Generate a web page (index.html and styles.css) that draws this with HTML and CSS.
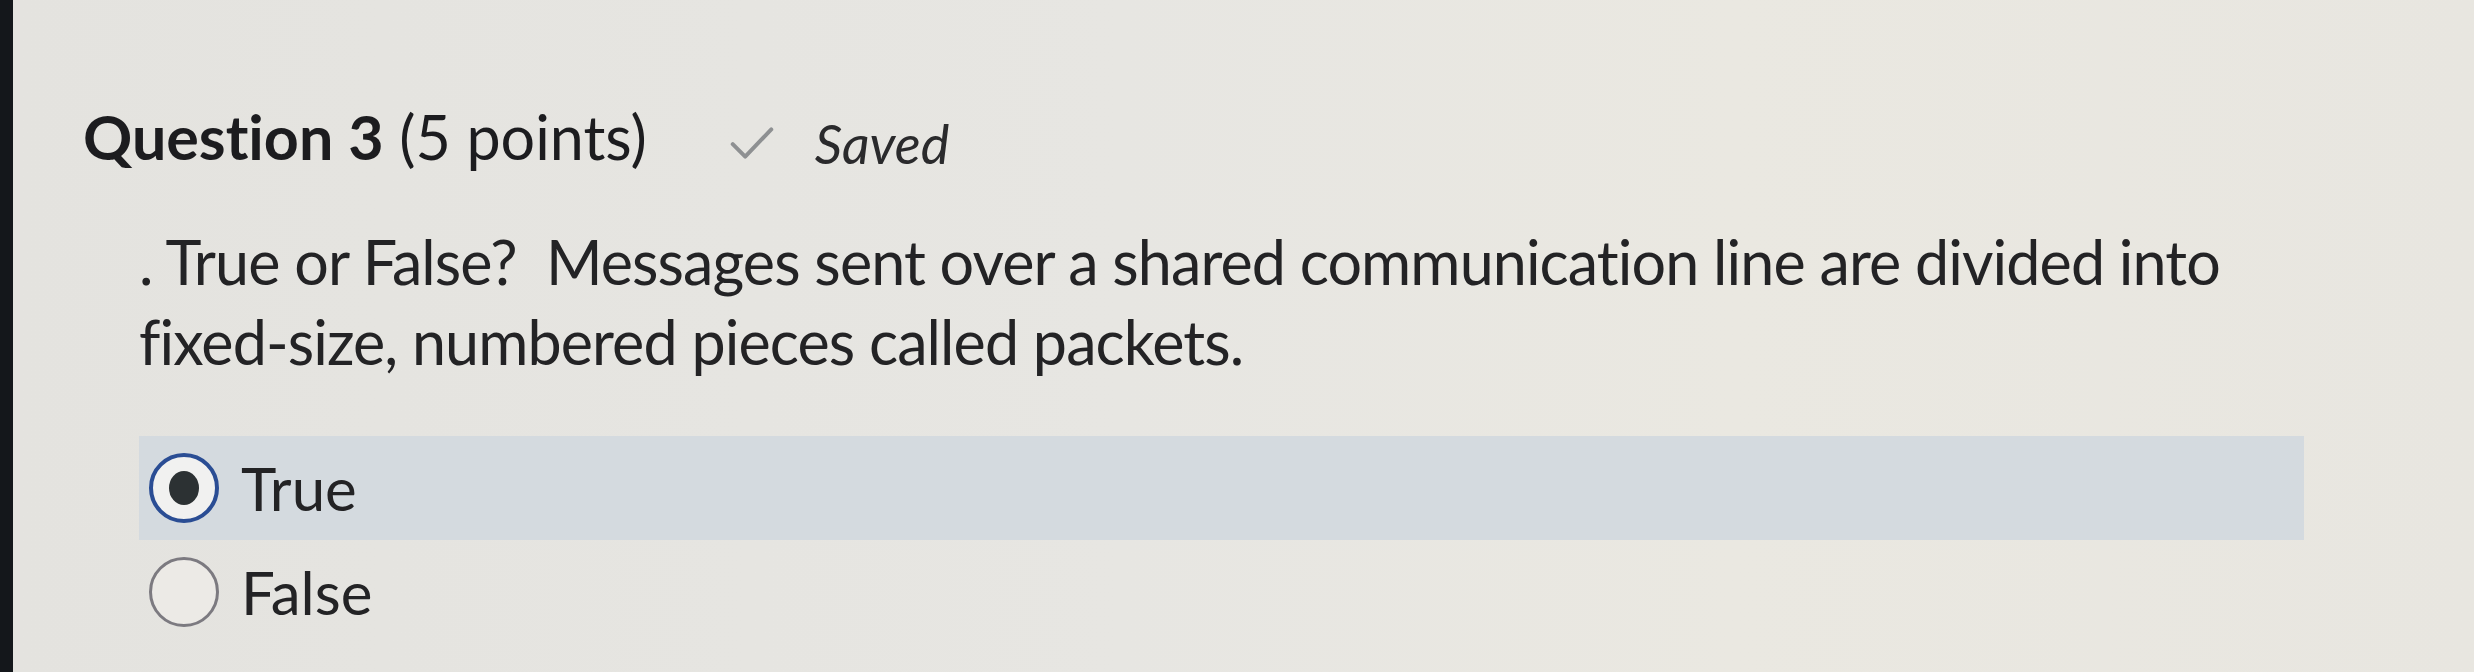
FILE: index.html
```html
<!DOCTYPE html>
<html lang="en">
<head>
    <meta charset="UTF-8">
    <title>Question 3</title>
    <link rel="stylesheet" href="styles.css">
</head>
<body>
    <div class="screen">
        <div class="question">
            <div class="question-header">
                <h2 class="question-title"><strong>Question 3</strong> (5 points)</h2>
                <span class="saved">
                    <svg class="check" viewBox="0 0 40 30" width="46" height="34">
                        <path d="M3 16 L14 27 L37 3" fill="none" stroke="#8e9092" stroke-width="3.5" stroke-linecap="round" stroke-linejoin="round"/>
                    </svg>
                    <em>Saved</em>
                </span>
            </div>
            <p class="question-text">. True or False?&nbsp; Messages sent over a shared communication line are divided into fixed-size, numbered pieces called packets.</p>
            <ul class="answers">
                <li class="answer selected">
                    <span class="radio checked"></span>
                    <span class="answer-label">True</span>
                </li>
                <li class="answer">
                    <span class="radio"></span>
                    <span class="answer-label">False</span>
                </li>
            </ul>
        </div>
    </div>
</body>
</html>
```

FILE: styles.css
```css
body {
    margin: 0;
    font-family: Lato, "Open Sans", Arial, sans-serif;
    font-variant-ligatures: none;
    color: #232325;
    background-color: #14171b;
}
.screen {
    margin-left: 13px;
    height: 672px;
    background: linear-gradient(90deg, #e4e3df 0%, #e7e6e2 45%, #eae8e1 70%, #e8e6e0 100%);
    overflow: hidden;
}
.question {
    padding: 100px 0 0 70px;
}
.question-header {
    display: flex;
    align-items: baseline;
}
.question-title {
    margin: 0;
    font-size: 61px;
    font-weight: 400;
    color: #1c1c1f;
}
.question-title strong {
    font-weight: 700;
}
.saved {
    display: flex;
    align-items: center;
    margin-left: 82px;
    font-size: 54px;
    color: #2a2a2c;
}
.saved .check {
    margin-right: 40px;
}
.question-text {
    width: 2240px;
    margin: 46px 0 0 56px;
    font-size: 61px;
    letter-spacing: -0.9px;
    line-height: 80px;
}
.answers {
    list-style: none;
    margin: 54px 0 0 56px;
    padding: 0;
    width: 2165px;
}
.answer {
    display: flex;
    align-items: center;
    height: 104px;
    padding-left: 10px;
    font-size: 60px;
}
.answer.selected {
    background-color: #d4dadf;
}
.radio {
    box-sizing: border-box;
    width: 70px;
    height: 70px;
    border: 3px solid #7c7a80;
    border-radius: 50%;
    background-color: #eceae6;
    margin-right: 22px;
    display: flex;
    align-items: center;
    justify-content: center;
}
.radio.checked {
    border: 4px solid #2a4d94;
    background-color: #f1f1f0;
}
.radio.checked::after {
    content: "";
    width: 30px;
    height: 34px;
    border-radius: 50%;
    background-color: #2c3133;
}
```
